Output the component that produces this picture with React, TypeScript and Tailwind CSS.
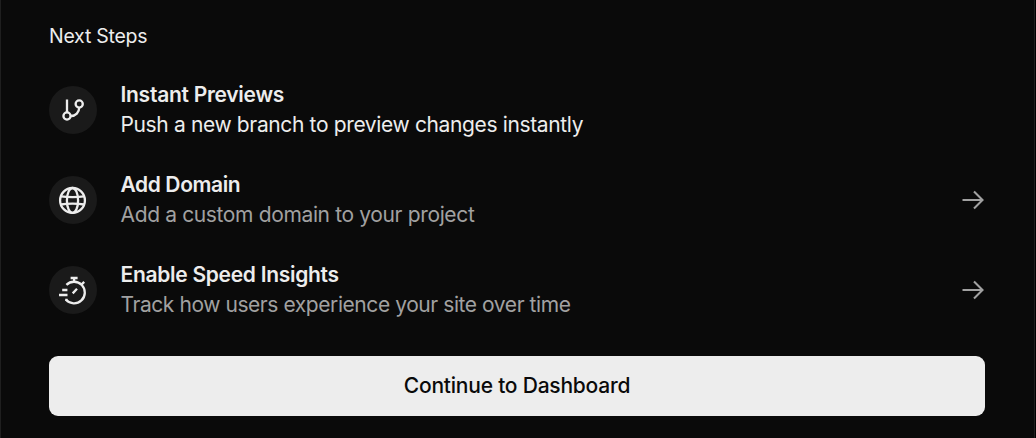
import React from 'react'

const BranchIcon = () => (
  <svg className="h-12 w-12" viewBox="0 0 48 48" fill="none" stroke="#ededed" strokeWidth="2.3">
    <path d="M18 13.5v12.8M30.2 21.8c0 4.6-3.6 8.2-8.2 8.2" />
    <circle cx="18" cy="30" r="3.6" />
    <circle cx="30.2" cy="18" r="3.6" />
  </svg>
)

const GlobeIcon = () => (
  <svg className="h-12 w-12" viewBox="0 0 48 48" fill="none" stroke="#ededed" strokeWidth="2.3">
    <circle cx="23.5" cy="24.4" r="12.4" />
    <ellipse cx="23.5" cy="24.4" rx="5.6" ry="12.4" />
    <path d="M12 20.3c3.5.6 7.3.8 11.5.8s8-.2 11.5-.8M12 28.5c3.5-.6 7.3-.8 11.5-.8s8 .2 11.5.8" />
  </svg>
)

const StopwatchIcon = () => (
  <svg className="h-12 w-12" viewBox="0 0 48 48" fill="none" stroke="#ededed" strokeWidth="2.3">
    <path d="M17.4 18.9A10.8 10.8 0 1 1 17 33.8" />
    <path d="M21.6 12h7M25.1 12v4M32.2 18.9l3-3M23.7 27.4l4.3-4.6" />
    <path d="M13.2 24h5.2M10 29h8.5M16.2 33.8h2.4" />
  </svg>
)

const ArrowIcon = () => (
  <svg className="h-6 w-6" viewBox="0 0 24 24" fill="none" stroke="#a1a1a1" strokeWidth="2.1">
    <path d="M1.5 12h20.5M13 3.5l8.500 8.500-8.500 8.500" />
  </svg>
)

const NextSteps = () => {
  return (
    <div className="h-[438px] w-[1036px] bg-black pr-px font-['Inter',sans-serif]">
      <div className="h-full border-x border-[#1f1f1f] bg-[#0a0a0a] pl-12 pr-[49px] pt-[22px] text-[#ededed]">
        <h2 className="text-[19.5px] leading-7 tracking-[-0.25px]">Next Steps</h2>

        <div className="mt-[30px] flex flex-col gap-[30px]">
          <div className="flex h-[60px] items-center gap-[23.5px]">
            <div className="h-12 w-12 rounded-full bg-[#1a1a1a]">
              <BranchIcon />
            </div>
            <div className="flex-1 text-[21px] leading-[30px]">
              <h3 className="font-semibold tracking-[-0.27px]">Instant Previews</h3>
              <p className="tracking-[-0.36px]">Push a new branch to preview changes instantly</p>
            </div>
          </div>

          <a className="flex h-[60px] items-center gap-[23.5px]" href="#">
            <div className="h-12 w-12 rounded-full bg-[#1a1a1a]">
              <GlobeIcon />
            </div>
            <div className="flex-1 text-[21px] leading-[30px]">
              <h3 className="font-semibold tracking-[-0.4px]">Add Domain</h3>
              <p className="tracking-[-0.36px] text-[#a1a1a1]">Add a custom domain to your project</p>
            </div>
            <ArrowIcon />
          </a>

          <a className="flex h-[60px] items-center gap-[23.5px]" href="#">
            <div className="h-12 w-12 rounded-full bg-[#1a1a1a]">
              <StopwatchIcon />
            </div>
            <div className="flex-1 text-[21px] leading-[30px]">
              <h3 className="font-semibold tracking-[-0.29px]">Enable Speed Insights</h3>
              <p className="tracking-[-0.43px] text-[#a1a1a1]">Track how users experience your site over time</p>
            </div>
            <ArrowIcon />
          </a>
        </div>

        <button className="mt-9 h-[60px] w-full rounded-[9px] bg-[#ededed] text-[21px] font-medium tracking-[-0.22px] text-[#0a0a0a]">
          Continue to Dashboard
        </button>
      </div>
    </div>
  )
}

export default NextSteps
